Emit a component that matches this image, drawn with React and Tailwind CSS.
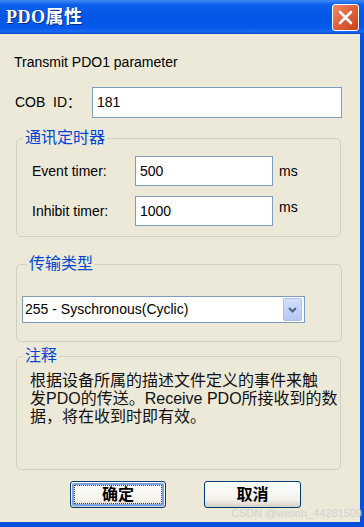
import React from "react";

const sans = { fontFamily: '"Liberation Sans", "Noto Sans CJK SC", sans-serif' };

function Field({ value, className }) {
  return (
    <div
      className={
        "bg-white border border-[#7f9db9] flex items-center pl-[4px] text-[14px] text-black " +
        className
      }
    >
      {value}
    </div>
  );
}

export default function App() {
  return (
    <div
      className="w-[364px] h-[527px] flex flex-col overflow-hidden relative bg-[#ece9d8]"
      style={sans}
    >
      {/* Title bar */}
      <div className="h-[34px] shrink-0 flex items-center justify-between pl-[6px] pr-[5px] bg-[linear-gradient(to_bottom,#3f8cf6_0%,#0b5fea_14%,#0056e6_50%,#0659ec_82%,#1a6af2_94%,#0844c6_100%)]">
        <div
          className="text-white font-bold text-[18px] leading-none tracking-[0.5px] [text-shadow:1px_1px_0_#0a2a8a]"
          style={{ fontFamily: '"Liberation Serif", "Noto Sans CJK SC", serif' }}
        >
          PDO属性
        </div>
        <div className="w-[27px] h-[27px] rounded-[3px] border border-white bg-[linear-gradient(135deg,#ef8b6a_0%,#e2643f_45%,#c9421c_100%)] flex items-center justify-center">
          <svg width="15" height="15" viewBox="0 0 15 15">
            <path d="M2 2 L13 13 M13 2 L2 13" stroke="white" strokeWidth="2.6" strokeLinecap="round" />
          </svg>
        </div>
      </div>

      {/* Body */}
      <div className="flex-1 flex flex-col border-r-[4px] border-b-[5px] border-[#0a4fdc] pl-[16px] pr-[18px]">
        <div className="mt-[20px] text-[14px] leading-[17px] text-black -ml-[2px]">
          Transmit PDO1 parameter
        </div>

        <div className="mt-[16px] flex items-center h-[31px]">
          <div className="w-[76px] -ml-[1px] text-[14px] whitespace-pre text-black">COB  ID：</div>
          <Field value="181" className="w-[250px] h-[31px] ml-[1px]" />
        </div>

        {/* Group 1 */}
        <fieldset className="mt-[10px] border border-[#d0d0bf] rounded-[5px] w-[325px] pl-[15px] pt-[8px] pb-[10px]">
          <legend className="-ml-[9px] px-[2px] text-[16px] leading-[20px] text-[#0046d5]">
            通讯定时器
          </legend>
          <div className="flex items-center h-[30px]">
            <div className="w-[103px] text-[14px] text-black">Event timer:</div>
            <Field value="500" className="w-[138px] h-[30px]" />
            <div className="ml-[6px] text-[14px] text-black">ms</div>
          </div>
          <div className="flex items-center h-[30px] mt-[10px]">
            <div className="w-[103px] text-[14px] text-black">Inhibit timer:</div>
            <Field value="1000" className="w-[138px] h-[30px]" />
            <div className="ml-[6px] text-[14px] text-black self-start mt-[1px]">ms</div>
          </div>
        </fieldset>

        {/* Group 2 */}
        <fieldset className="mt-[17px] border border-[#d0d0bf] rounded-[5px] w-[326px] pl-[5px] pt-[22px] pb-[18px]">
          <legend className="ml-[5px] px-[2px] text-[16px] leading-[20px] text-[#0046d5]">
            传输类型
          </legend>
          <div className="w-[283px] h-[27px] bg-white border border-[#7f9db9] flex items-center justify-between pl-[2px] pr-[2px]">
            <span className="text-[14px] text-black">255 - Syschronous(Cyclic)</span>
            <div className="w-[19px] h-[23px] rounded-[2px] bg-[linear-gradient(to_bottom,#d3e0fc,#b4c8f6)] border border-[#aec3f0] flex items-center justify-center">
              <svg width="9" height="6" viewBox="0 0 9 6">
                <path d="M1 1 L4.5 4.5 L8 1" fill="none" stroke="#4d6185" strokeWidth="2" />
              </svg>
            </div>
          </div>
        </fieldset>

        {/* Group 3 */}
        <fieldset className="mt-[4px] border border-[#d0d0bf] rounded-[5px] w-[325px] pl-[13px] pt-[6px] pb-[43px]">
          <legend className="-ml-[7px] px-[2px] text-[16px] leading-[20px] text-[#0046d5]">
            注释
          </legend>
          <div className="text-[16px] leading-[18px] text-[#111] whitespace-nowrap">
            根据设备所属的描述文件定义的事件来触
            <br />
            发PDO的传送。Receive PDO所接收到的数
            <br />
            据，将在收到时即有效。
          </div>
        </fieldset>

        {/* Buttons */}
        <div className="mt-[11px] flex pl-[54px] gap-[38px]">
          <div className="w-[96px] h-[27px] rounded-[3px] border border-[#003c74] bg-[linear-gradient(to_bottom,#ffffff,#f3f2ec_70%,#d6d0c5)] p-[1px]">
            <div className="w-full h-full rounded-[2px] border-2 border-[#7aa4e8] flex items-center justify-center">
              <div className="w-full h-full border border-dotted border-[#444] flex items-center justify-center text-[16px] font-bold text-black leading-none">
                确定
              </div>
            </div>
          </div>
          <div className="w-[97px] h-[27px] rounded-[3px] border border-[#003c74] bg-[linear-gradient(to_bottom,#ffffff,#f3f2ec_70%,#d6d0c5)] flex items-center justify-center text-[16px] font-bold text-black leading-none">
            取消
          </div>
        </div>
      </div>

      <div className="absolute right-[2px] bottom-[8px] text-[11px] text-[#d2d2d2] leading-none">
        CSDN @weixin_44281509
      </div>
    </div>
  );
}
